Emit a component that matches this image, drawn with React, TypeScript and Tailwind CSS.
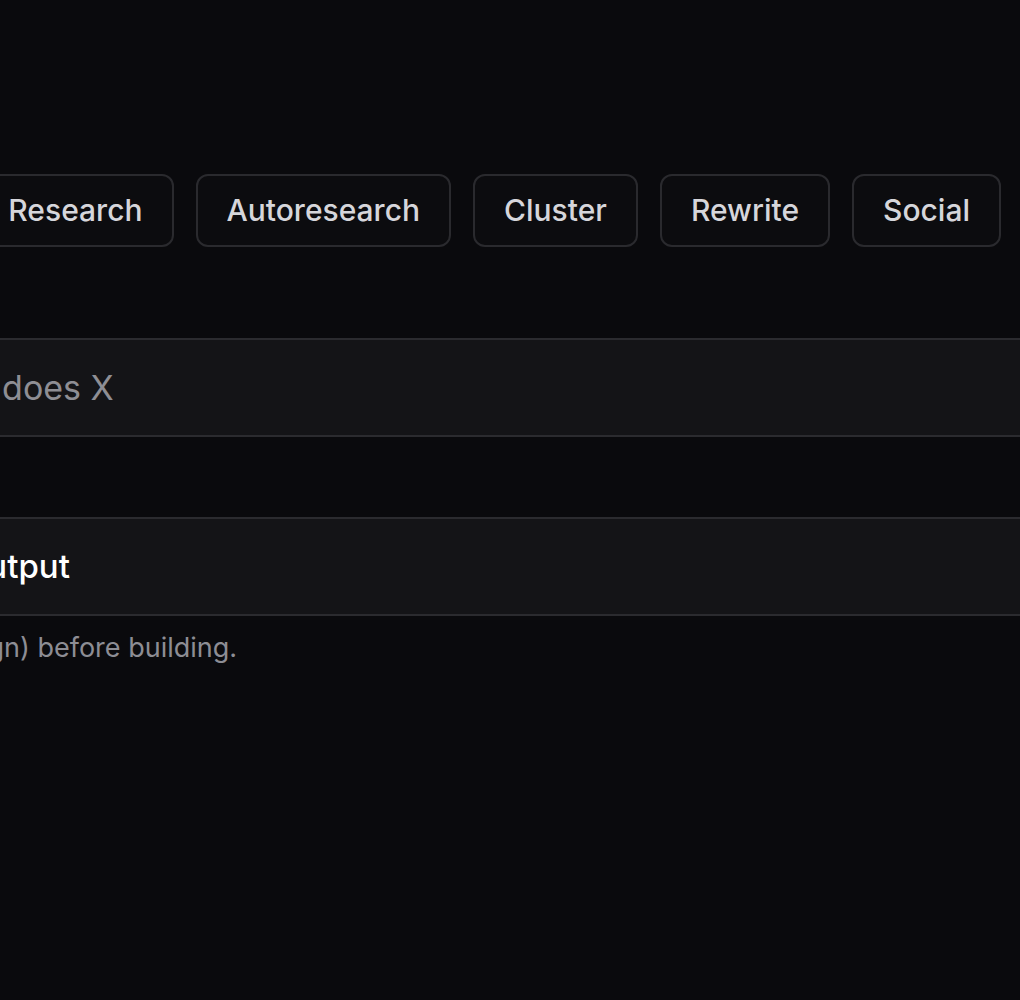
import React from "react";

const modes = ["Search", "Repo Research", "Autoresearch", "Cluster", "Rewrite", "Social"];

function ModeButton({ label }: { label: string }) {
  return (
    <button className="h-[73px] shrink-0 whitespace-nowrap rounded-[12px] border-2 border-[#2a2a2e] bg-[#0c0c0f] px-[29px] text-[30px] font-medium text-[#d6d6db]">
      {label}
    </button>
  );
}

export default function App() {
  return (
    <div
      className="h-[1000px] w-full overflow-hidden bg-[#0a0a0d]"
      style={{ fontFamily: "Inter, 'Noto Sans', sans-serif" }}
    >
      {/* mode picker */}
      <div className="flex justify-end gap-[22px] pr-[19px] pt-[174px]">
        {modes.map((m) => (
          <ModeButton key={m} label={m} />
        ))}
      </div>

      {/* prompt */}
      <div className="mt-[91px] flex h-[99px] items-center border-y-2 border-[#2b2b2f] bg-[#141417]">
        <span className="-ml-[334px] whitespace-nowrap text-[34px] text-[#8e8e94]">
          e.g. A small tool that does X
        </span>
      </div>

      {/* output section */}
      <div className="mt-[80px] flex h-[99px] items-center border-y-2 border-[#2b2b2f] bg-[#141417]">
        <span className="-ml-[38px] whitespace-nowrap text-[33px] font-medium text-white">
          Output
        </span>
      </div>
      <p className="-ml-[668px] mt-[12px] whitespace-nowrap text-[27px] text-[#8d8d94]">
        Describe what you want to see (format, layout, design) before building.
      </p>
    </div>
  );
}
